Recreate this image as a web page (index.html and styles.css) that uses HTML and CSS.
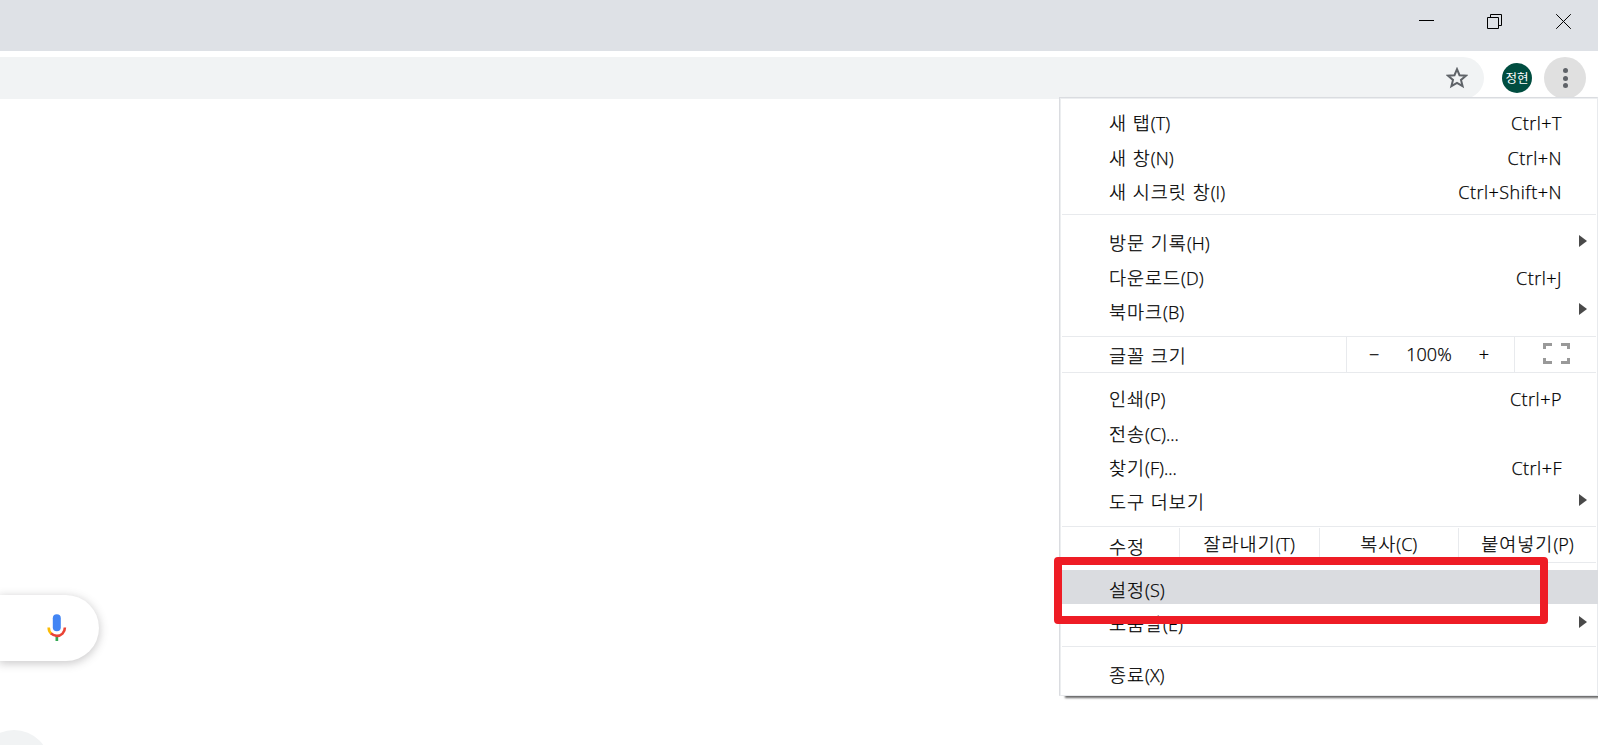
FILE: index.html
```html
<!doctype html>
<html lang="ko">
<head>
	<meta charset="utf-8" />
	<meta name="viewport" content="width=device-width, initial-scale=1" />

	<title>새 탭</title>

<link rel="stylesheet" href="styles.css">
</head>
<body>

<div class="titlebar">
	<svg class="win" width="16" height="16" viewBox="0 0 16 16"><path d="M1 6.5h15" /></svg>
	<svg class="win" width="16" height="16" viewBox="0 0 16 16"><path d="M.5 3.5h11v11H.5zM3.500 3.500v-3h11v11h-3" /></svg>
	<svg class="win" width="16" height="16" viewBox="0 0 16 16"><path d="M.2.2l14.600 14.600M14.800.2L.2 14.800" /></svg>
</div>

<div class="toolbar">
	<div class="omnibox">
		<svg width="22" height="22" viewBox="0 0 22 22"><path class="star" d="M11 2.200l2.500 6 6.500.500-5 4.200 1.600 6.300L11 15.800l-5.600 3.400L7 12.900 2 8.700l6.500-.5z" /></svg>
	</div>
	<div class="avatar">정현</div>
	<div class="more"><i></i><i></i><i></i></div>
</div>

<div class="content">
	<div class="search">
		<svg width="20" height="28" viewBox="0 0 20 28">
			<rect x="5.800" y="0.300" width="8" height="17" rx="4" fill="#4285f4" />
			<path d="M8.500 22h2.700v5H8.500z" fill="#34a853" />
			<path d="M1.700 13.500c0 3 1.200 5.200 3 6.500" stroke="#fbbc05" />
			<path d="M4 19.400c3.500 3.300 8.300 3.300 11.500.2 1.600-1.500 2.400-3.500 2.400-6.100" stroke="#ea4335" />
		</svg>
	</div>
	<div class="shortcut"></div>
</div>

<div class="menu">
	<div class="group first">
		<div class="item">새 탭<span>(T)</span><kbd>Ctrl+T</kbd></div>
		<div class="item">새 창<span>(N)</span><kbd>Ctrl+N</kbd></div>
		<div class="item">새 시크릿 창<span>(I)</span><kbd>Ctrl+Shift+N</kbd></div>
	</div>
	<div class="group history">
		<div class="item sub">방문 기록<span>(H)</span></div>
		<div class="item">다운로드<span>(D)</span><kbd>Ctrl+J</kbd></div>
		<div class="item sub">북마크<span>(B)</span></div>
	</div>
	<div class="group zoom">
		<div class="label">글꼴 크기</div>
		<div class="level"><span>−</span><span>100%</span><span>+</span></div>
		<div class="full">
			<svg width="27" height="21" viewBox="0 0 27 21"><path d="M1.500 6V1.500H9M18 1.500h7.500V6M25.500 15v4.500H18M9 19.500H1.500V15" /></svg>
		</div>
	</div>
	<div class="group tools">
		<div class="item">인쇄<span>(P)</span><kbd>Ctrl+P</kbd></div>
		<div class="item">전송<span>(C)...</span></div>
		<div class="item">찾기<span>(F)...</span><kbd>Ctrl+F</kbd></div>
		<div class="item sub">도구 더보기</div>
	</div>
	<div class="group edit">
		<div class="label">수정</div>
		<div class="cell">잘라내기<span>(T)</span></div>
		<div class="cell">복사<span>(C)</span></div>
		<div class="cell">붙여넣기<span>(P)</span></div>
	</div>
	<div class="group settings">
		<div class="item active">설정<span>(S)</span></div>
		<div class="item sub">도움말<span>(E)</span></div>
	</div>
	<div class="group quit">
		<div class="item">종료<span>(X)</span></div>
	</div>
</div>

<div class="marker"></div>

</body>
</html>
```
FILE: styles.css
```css
* {
	box-sizing: border-box;
}

body {
	margin: 0;
	height: 745px;
	overflow: hidden;
	position: relative;
	background: #fff;
	color: #000;
	font-family: "Open Sans", "Noto Sans CJK KR", sans-serif;
}

/* window frame */

.titlebar {
	height: 51px;
	padding: 14px 26px 0 0;
	display: flex;
	justify-content: flex-end;
	gap: 53px;
	background: #dee1e6;
}

.win {
	fill: none;
	stroke: #000;
}

.toolbar {
	height: 48px;
	padding: 6px 12px 0 0;
	display: flex;
	align-items: center;
}

.omnibox {
	flex: 1;
	height: 42px;
	padding-right: 16px;
	display: flex;
	align-items: center;
	justify-content: flex-end;
	background: #f1f3f4;
	border-radius: 0 21px 21px 0;
}

.star {
	fill: none;
	stroke: #5f6368;
	stroke-width: 2;
}

.avatar {
	width: 30px;
	height: 30px;
	margin: 0 12px 0 18px;
	border-radius: 50%;
	background: #004d40;
	color: #fff;
	font: 12.500px/29px "Noto Sans CJK KR", sans-serif;
	text-align: center;
}

.more {
	width: 42px;
	height: 42px;
	display: flex;
	flex-direction: column;
	align-items: center;
	justify-content: center;
	gap: 2.500px;
	border-radius: 50%;
	background: #e0e0e0;
}

.more i {
	width: 5px;
	height: 5px;
	border-radius: 50%;
	background: #5f6368;
}

/* new tab page */

.content {
	height: 646px;
	padding-top: 496px;
	overflow: hidden;
}

.search {
	width: 99px;
	height: 66px;
	padding: 19px 0 0 47px;
	border-radius: 0 33px 33px 0;
	box-shadow: 0 2px 8px 1px rgba(64, 60, 67, .26);
}

.search path[stroke] {
	fill: none;
	stroke-width: 2.600;
}

.shortcut {
	width: 72px;
	height: 72px;
	margin: 69px 0 0 -22px;
	border-radius: 50%;
	background: #f1f3f4;
}

/* dropdown */

.menu {
	position: absolute;
	left: 1059px;
	top: 97px;
	width: 539px;
	height: 599px;
	border: 1px solid #dadce0;
	border-right-color: #e8eaed;
	border-bottom-color: #e8eaed;
	padding: 1px 1px 0 2px;
	background: #fff;
	box-shadow: inset 1px 1px #eceef0, 6px 2px 2px rgba(0, 0, 0, .6);
	font-weight: 300;
	-webkit-text-stroke: .25px #000;
}

.group {
	border-bottom: 1px solid #e8eaed;
}

.item {
	height: 34.400px;
	padding: 0 34px 0 47px;
	display: flex;
	align-items: center;
	white-space: pre;
}

.item,
.label,
.cell {
	font-size: 18.500px;
	letter-spacing: 1px;
}

.menu span,
.menu kbd {
	font-family: "Open Sans", sans-serif;
	font-size: 18px;
	letter-spacing: 0;
}

.item span,
.item kbd {
	padding-top: 2px;
}

.menu kbd {
	margin-left: auto;
	letter-spacing: .500px;
}

.sub::after {
	content: "";
	margin: -3px -25px 0 auto;
	border: 6px solid transparent;
	border-left: 8px solid #4a4a4a;
	border-right: 0;
}

.active {
	height: 34px;
	margin: 0 -2px 2px 0;
	padding-top: 4px;
	background: #dadce0;
}

.first {
	height: 116px;
	padding-top: 6px;
}

.history {
	height: 122px;
	padding-top: 10px;
}

.tools {
	height: 154px;
	padding-top: 8px;
}

.settings {
	height: 84px;
	padding-top: 7px;
}

.quit {
	padding-top: 10px;
	border: 0;
}

.zoom,
.edit {
	height: 36px;
	display: flex;
}

.label {
	padding: 5px 0 0 47px;
	line-height: 28px;
}

.zoom .label {
	width: 284px;
}

.edit .label {
	width: 117px;
	padding-top: 6px;
}

.level {
	width: 168px;
	display: flex;
	align-items: center;
	justify-content: space-between;
	padding: 0 25px 1px 22px;
	border-left: 1px solid #e8eaed;
}

.full {
	flex: 1;
	padding: 6px 0 0 28px;
	border-left: 1px solid #e8eaed;
}

.full path {
	fill: none;
	stroke: #999;
	stroke-width: 3;
}

.cell {
	flex: 0 0 139.500px;
	margin-top: 1px;
	line-height: 32px;
	text-align: center;
	border-left: 1px solid #e8eaed;
}

.cell:last-child {
	flex: 1;
}

/* highlight frame over the settings item */

.marker {
	position: absolute;
	left: 1054px;
	top: 557px;
	width: 494px;
	height: 67px;
	border: 8px solid #ee1c25;
	border-radius: 4px;
}
```
